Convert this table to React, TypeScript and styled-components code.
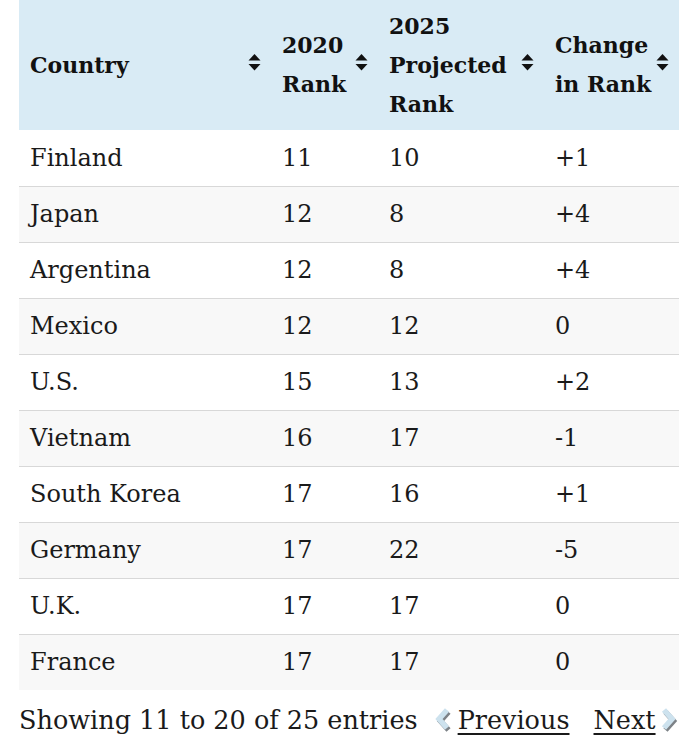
import styled, { createGlobalStyle } from "styled-components";

const GlobalStyle = createGlobalStyle`
    body {
        margin: 0;
        background: #ffffff;
        font-family: "DejaVu Serif", "Liberation Serif", serif;
        color: #111111;
    }
`;

const Wrapper = styled.div`
    padding: 0 17px 0 19px;
`;

const Table = styled.table`
    width: 660px;
    border-collapse: collapse;
`;

const HeadCell = styled.th<{ $w: number }>`
    position: relative;
    width: ${(p) => p.$w}px;
    height: 130px;
    box-sizing: border-box;
    padding: 0 22px 0 11px;
    background: #d9ebf5;
    text-align: left;
    vertical-align: middle;
    font-size: 22px;
    font-weight: 700;
    line-height: 39px;
    color: #111111;
`;

const SortIcon = styled.svg`
    position: absolute;
    right: 10px;
    top: 50%;
    margin-top: -12px;
`;

const Row = styled.tr<{ $odd: boolean }>`
    background: ${(p) => (p.$odd ? "#ffffff" : "#f8f8f8")};
`;

const Cell = styled.td<{ $first: boolean }>`
    height: 56px;
    box-sizing: border-box;
    padding: 0 11px;
    border-top: ${(p) => (p.$first ? "none" : "1px solid #d8d8d8")};
    font-size: 24px;
    vertical-align: middle;
    color: #1a1a1a;
`;

const Footer = styled.div`
    display: flex;
    align-items: center;
    height: 60px;
    font-size: 25.5px;
    color: #1a1a1a;
`;

const Info = styled.div`
    flex: none;
`;

const Pager = styled.div`
    display: flex;
    align-items: center;
    margin-left: 15px;
`;

const PageLink = styled.a`
    color: #1a1a1a;
    text-decoration: underline;
    text-decoration-thickness: 2px;
    text-underline-offset: 4px;
    cursor: pointer;
`;

const Spacer = styled.span`
    width: 24px;
`;

const ArrowIcon = styled.svg<{ $left: boolean }>`
    flex: none;
    margin: ${(p) => (p.$left ? "0 4px 0 0" : "0 0 0 3px")};
`;

interface IRow {
    country: string;
    r2020: number;
    r2025: number;
    change: string;
}

const rows: IRow[] = [
    { country: "Finland", r2020: 11, r2025: 10, change: "+1" },
    { country: "Japan", r2020: 12, r2025: 8, change: "+4" },
    { country: "Argentina", r2020: 12, r2025: 8, change: "+4" },
    { country: "Mexico", r2020: 12, r2025: 12, change: "0" },
    { country: "U.S.", r2020: 15, r2025: 13, change: "+2" },
    { country: "Vietnam", r2020: 16, r2025: 17, change: "-1" },
    { country: "South Korea", r2020: 17, r2025: 16, change: "+1" },
    { country: "Germany", r2020: 17, r2025: 22, change: "-5" },
    { country: "U.K.", r2020: 17, r2025: 17, change: "0" },
    { country: "France", r2020: 17, r2025: 17, change: "0" },
];

const columns = [
    { w: 252, label: ["Country"] },
    { w: 107, label: ["2020", "Rank"] },
    { w: 166, label: ["2025", "Projected", "Rank"] },
    { w: 135, label: ["Change", "in Rank"] },
];

function Sort() {
    return (
        <SortIcon width="13" height="19" viewBox="0 0 13 19">
            <path d="M0.5 7.5 L6.5 1 L12.5 7.5 Z" fill="#111" />
            <path d="M0.5 11 L6.5 17.5 L12.5 11 Z" fill="#111" />
        </SortIcon>
    );
}

function Chevron({ dir }: { dir: "left" | "right" }) {
    const left = dir === "left";
    const d = left ? "M14 3 L6 12 L14 21" : "M5 3 L13 12 L5 21";
    return (
        <ArrowIcon $left={left} width="21" height="27" viewBox="0 0 21 27">
            <path d={d} transform="translate(1.5 2)" fill="none" stroke="#7d8287" strokeWidth="5.5" />
            <path d={d} fill="none" stroke="#cde2ee" strokeWidth="5.5" />
        </ArrowIcon>
    );
}

function App() {
    return (
        <Wrapper>
            <GlobalStyle />
            <Table>
                <thead>
                    <tr>
                        {columns.map((c) => (
                            <HeadCell key={c.w} $w={c.w}>
                                {c.label.map((l, i) => (
                                    <span key={l}>
                                        {i > 0 && <br />}
                                        {l}
                                    </span>
                                ))}
                                <Sort />
                            </HeadCell>
                        ))}
                    </tr>
                </thead>
                <tbody>
                    {rows.map((r, i) => (
                        <Row key={r.country} $odd={i % 2 === 0}>
                            <Cell $first={i === 0}>{r.country}</Cell>
                            <Cell $first={i === 0}>{r.r2020}</Cell>
                            <Cell $first={i === 0}>{r.r2025}</Cell>
                            <Cell $first={i === 0}>{r.change}</Cell>
                        </Row>
                    ))}
                </tbody>
            </Table>
            <Footer>
                <Info>Showing 11 to 20 of 25 entries</Info>
                <Pager>
                    <Chevron dir="left" />
                    <PageLink>Previous</PageLink>
                    <Spacer />
                    <PageLink>Next</PageLink>
                    <Chevron dir="right" />
                </Pager>
            </Footer>
        </Wrapper>
    );
}

export default App;
